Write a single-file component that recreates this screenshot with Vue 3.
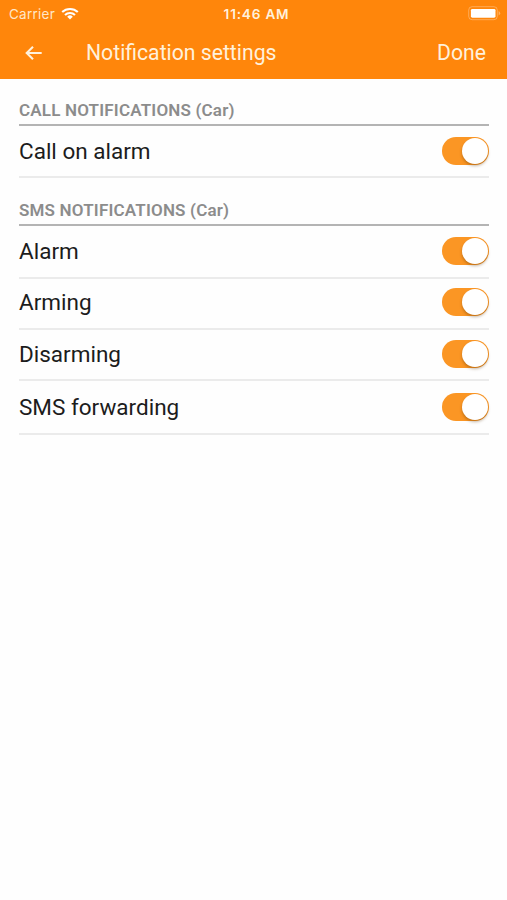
<script setup>
import { reactive } from 'vue'

const sections = reactive([
  {
    id: 'call',
    title: 'CALL NOTIFICATIONS (Car)',
    items: [{ id: 'call-alarm', label: 'Call on alarm', enabled: true }],
  },
  {
    id: 'sms',
    title: 'SMS NOTIFICATIONS (Car)',
    items: [
      { id: 'alarm', label: 'Alarm', enabled: true },
      { id: 'arming', label: 'Arming', enabled: true },
      { id: 'disarming', label: 'Disarming', enabled: true },
      { id: 'forwarding', label: 'SMS forwarding', enabled: true },
    ],
  },
])
</script>

<template>
  <div class="screen">
    <header class="header">
      <div class="status">
        <div class="status-left">
          <span class="carrier">Carrier</span>
          <svg class="wifi" width="18" height="13" viewBox="0 0 18 13" fill="none" stroke="#fff" stroke-width="2.1">
            <path d="M1.2 5.1A11.2 11.2 0 0 1 16.8 5.1" />
            <path d="M4 8A7.2 7.2 0 0 1 14 8" />
            <path d="M9 12.4L6.2 9.7A4 4 0 0 1 11.8 9.7Z" fill="#fff" stroke="none" />
          </svg>
        </div>
        <span class="time">11:46 AM</span>
        <svg class="battery" width="33" height="15" viewBox="0 0 33 15">
          <rect x="0.7" y="0.7" width="28.6" height="13" rx="3.4" fill="none" stroke="#fff" stroke-opacity="0.3" />
          <rect x="2.9" y="2.9" width="24.6" height="8.8" rx="1.4" fill="#fff" />
          <path d="M30.6 5v4.4q1.6-.7 1.6-2.2T30.6 5Z" fill="#fff" fill-opacity="0.35" />
        </svg>
      </div>

      <div class="navbar">
        <button class="back" aria-label="Back">
          <svg width="18" height="16" viewBox="0 0 18 16" fill="none" stroke="#fff1dc" stroke-width="2.1">
            <path d="M16.7 8H2M8 1.7L1.7 8L8 14.3" />
          </svg>
        </button>
        <h1 class="title">Notification settings</h1>
        <button class="done">Done</button>
      </div>
    </header>

    <main class="content">
      <section v-for="section in sections" :key="section.id" class="section">
        <h2 class="section-title">{{ section.title }}</h2>
        <label v-for="item in section.items" :key="item.id" class="row">
          <span class="row-label">{{ item.label }}</span>
          <input v-model="item.enabled" type="checkbox" class="switch" />
        </label>
      </section>
    </main>
  </div>
</template>

<style>
body {
  background: #fefefe;
}
</style>

<style scoped>
.screen {
  min-height: 900px;
  font-family: Roboto, 'Liberation Sans', sans-serif;
  background: #fefefe;
}

.header {
  height: 79px;
  color: #fff;
  background: #ff860b;
}

.status {
  display: grid;
  grid-template-columns: 1fr auto 1fr;
  align-items: center;
  height: 27px;
  padding: 0 6px 0 9px;
  font-family: Inter, sans-serif;
  font-size: 13.5px;
}

.status-left {
  display: flex;
  align-items: center;
  gap: 6px;
}

.carrier {
  color: #ffe7c8;
  letter-spacing: 0.25px;
}

.time {
  padding-left: 3px;
  color: #fff1dc;
  font-size: 13.6px;
  font-weight: 600;
  letter-spacing: 0.8px;
}

.battery {
  justify-self: end;
}

.navbar {
  box-sizing: border-box;
  display: flex;
  align-items: center;
  height: 51px;
  padding: 0 21px 0 25px;
}

.back,
.done {
  padding: 0;
  color: inherit;
  font-family: inherit;
  background: none;
  border: 0;
}

.back {
  display: flex;
  width: 61px;
}

.title {
  flex: 1;
  margin: 0;
  color: #fff1dc;
  font-size: 21.2px;
  font-weight: 400;
}

.done {
  color: #fff1dc;
  font-size: 21.2px;
}

.content {
  padding: 0 18px 0 19px;
}

.section-title {
  box-sizing: border-box;
  height: 47px;
  margin: 0;
  padding-top: 21px;
  color: #8c8c8c;
  font-size: 17px;
  font-weight: 600;
  line-height: 20px;
  letter-spacing: 0.18px;
  border-bottom: 2px solid #b4b4b4;
}

.section + .section .section-title {
  height: 48px;
  padding-top: 22px;
}

.row {
  box-sizing: border-box;
  display: flex;
  align-items: center;
  justify-content: space-between;
  height: 52px;
  border-bottom: 2px solid #ebebeb;
}

.section + .section .row:nth-of-type(1) {
  height: 53px;
  padding-bottom: 1px;
}

.row:nth-of-type(n + 2) {
  height: 51px;
  padding-bottom: 3px;
}

.row:nth-of-type(3) {
  padding-bottom: 2px;
}

.row:nth-of-type(4) {
  height: 54px;
  padding-bottom: 0;
}

.row-label {
  color: #1c1c1c;
  font-size: 22.5px;
}

.switch {
  position: relative;
  width: 47px;
  height: 28px;
  margin: 0;
  background: #fb9624;
  border-radius: 14px;
  appearance: none;
}

.switch::after {
  position: absolute;
  top: 1px;
  left: 1px;
  width: 26px;
  height: 26px;
  background: #fff;
  border-radius: 50%;
  box-shadow: 0 2px 3px rgba(90, 50, 0, 0.35);
  content: '';
}

.switch:checked::after {
  left: 19.5px;
}

.switch:not(:checked) {
  background: #ccc;
}
</style>
